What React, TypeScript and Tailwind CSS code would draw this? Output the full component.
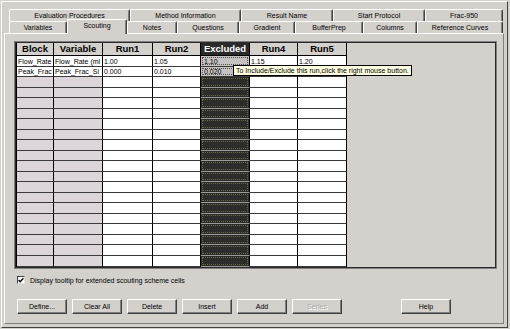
import React from "react";

const ROW1 = [
  { label: "Evaluation Procedures", w: "w-[121px]" },
  { label: "Method Information", w: "w-[111px]" },
  { label: "Result Name", w: "w-[92px]" },
  { label: "Start Protocol", w: "w-[92px]" },
  { label: "Frac-950", w: "w-[78px]" },
];

const ROW2 = [
  { label: "Variables", w: "w-[58px]" },
  { label: "Scouting", w: "w-[60px]", sel: true },
  { label: "Notes", w: "w-[50px]" },
  { label: "Questions", w: "w-[62px]" },
  { label: "Gradient", w: "w-[56px]" },
  { label: "BufferPrep", w: "w-[68px]" },
  { label: "Columns", w: "w-[54px]" },
  { label: "Reference Curves", w: "w-[86px]" },
];

const COLS = ["w-[37px]", "w-[49px]", "w-[50px]", "w-[48px]", "w-[49px]", "w-[48px]", "w-[49px]"];
const HEAD = ["Block", "Variable", "Run1", "Run2", "Excluded", "Run4", "Run5"];
const DATA = [
  ["Flow_Rate", "Flow_Rate (ml", "1.00", "1.05", "1.10", "1.15", "1.20"],
  ["Peak_Frac", "Peak_Frac_Si", "0.000", "0.010", "0.020", "", ""],
];

function Tab({ label, w, sel }: { label: string; w: string; sel?: boolean }) {
  if (sel) {
    return (
      <div
        className={`${w} relative z-10 -mt-[2px] h-[15px] pb-[3px] flex items-center justify-center bg-[#d4d0cc] border-t border-l border-white border-r border-r-[#404040] shadow-[inset_-1px_0_0_#808080] rounded-t-[2px]`}
      >
        {label}
      </div>
    );
  }
  return (
    <div
      className={`${w} h-[12px] flex items-center justify-center border-t border-l border-white border-r border-r-[#404040] shadow-[inset_-1px_0_0_#808080] rounded-t-[2px]`}
    >
      {label}
    </div>
  );
}

function Button({ label, disabled }: { label: string; disabled?: boolean }) {
  return (
    <div
      className={`w-[50px] h-[15px] flex items-center justify-center border border-t-white border-l-white border-r-[#404040] border-b-[#404040] shadow-[inset_-1px_-1px_0_#808080] ${
        disabled ? "text-[#aaa6a6] [text-shadow:1px_1px_0_#ffffff]" : "text-black"
      }`}
    >
      {label}
    </div>
  );
}

function DataCell({ c, r }: { c: number; r: number }) {
  const text = r < DATA.length ? DATA[r][c] : "";
  const w = COLS[c];
  if (c === 4) {
    if (r < DATA.length) {
      return (
        <div className={`${w} h-full border-r border-b border-r-black border-b-[#3a3a3a] bg-[#c6c2c2] p-[1px]`}>
          <div className="h-full border border-dotted border-[#505050] pl-[1px] flex items-center overflow-hidden whitespace-nowrap">
            {text}
          </div>
        </div>
      );
    }
    return (
      <div className={`${w} h-full border-r border-b border-r-black border-b-[#9a9a9a] bg-[#2c2c2a] p-[1px]`}>
        <div className="h-full border border-dotted border-[#6a6848]" />
      </div>
    );
  }
  const hatched = c < 2 && r >= DATA.length;
  return (
    <div
      className={`${w} h-full border-r border-b border-r-black border-b-[#3a3a3a] pl-[1px] flex items-center overflow-hidden whitespace-nowrap ${
        hatched ? "bg-[#dcd5da]" : "bg-white"
      }`}
    >
      {text}
    </div>
  );
}

export default function App() {
  const rows = Array.from({ length: 20 }, (_, i) => i);
  return (
    <div className="w-[510px] h-[329px] bg-[#d4d0cc] overflow-hidden pl-[1px] pt-[1px] font-['Liberation_Sans',Arial,sans-serif] text-[7px] leading-none text-black">
      <div className="relative w-[507px] h-[327px] border border-l-white border-t-white border-r-[#404040] border-b-[#404040]">
        {/* tabs */}
        <div className="pt-[7px] pl-[7px]">
          <div className="flex h-[12px]">
            {ROW1.map((t) => (
              <Tab key={t.label} label={t.label} w={t.w} />
            ))}
          </div>
          <div className="flex h-[12px] items-start">
            {ROW2.map((t) => (
              <Tab key={t.label} label={t.label} w={t.w} sel={t.sel} />
            ))}
          </div>
        </div>

        {/* panel */}
        <div className="ml-[2px] w-[500px] h-[291px] border border-l-white border-t-white border-r-[#808080] border-b-[#808080] pl-[9px] pt-[7px]">
          {/* grid frame */}
          <div className="w-[483px] h-[228px] border border-[#808080]">
            <div className="w-full h-full border border-[#2a2a2a]">
              <div className="w-[331px] border-l border-black flex flex-col">
                <div className="flex h-[13px] border-b border-black">
                  {HEAD.map((h, c) => (
                    <div
                      key={h}
                      className={`${COLS[c]} h-full border-r border-black flex items-center justify-center font-bold text-[9.5px] ${
                        c === 4 ? "bg-[#2a2a2a] text-white" : "bg-[#d4d0cc] text-black"
                      }`}
                    >
                      {h}
                    </div>
                  ))}
                </div>
                {rows.map((r) => (
                  <div key={r} className={`flex ${r % 2 === 0 || r === 19 ? "h-[11px]" : "h-[10px]"}`}>
                    {COLS.map((_, c) => (
                      <DataCell key={c} c={c} r={r} />
                    ))}
                  </div>
                ))}
              </div>
            </div>
          </div>

          {/* checkbox */}
          <div className="mt-[7px] ml-[3px] flex items-center h-[8px]">
            <div className="w-[8px] h-[8px] bg-white border border-t-[#404040] border-l-[#404040] border-r-[#e0e0e0] border-b-[#e0e0e0] flex items-center justify-center">
              <svg width="6" height="6" viewBox="0 0 6 6">
                <polyline points="0.6,3 2.2,4.8 5.4,1.2" fill="none" stroke="#000" strokeWidth="1.3" />
              </svg>
            </div>
            <span className="ml-[5px]">Display tooltip for extended scouting scheme cells</span>
          </div>

          {/* buttons */}
          <div className="mt-[15px] ml-[3px] flex gap-[5px]">
            <Button label="Define..." />
            <Button label="Clear All" />
            <Button label="Delete" />
            <Button label="Insert" />
            <Button label="Add" />
            <Button label="Series" disabled />
            <div className="ml-[54px]">
              <Button label="Help" />
            </div>
          </div>
        </div>

        {/* tooltip */}
        <div className="absolute left-[231px] top-[63px] w-[179px] h-[11px] bg-[#ffffe1] border border-black pl-[2px] flex items-center whitespace-nowrap overflow-hidden">
          To Include/Exclude this run,click the right mouse button.
        </div>
      </div>
    </div>
  );
}
